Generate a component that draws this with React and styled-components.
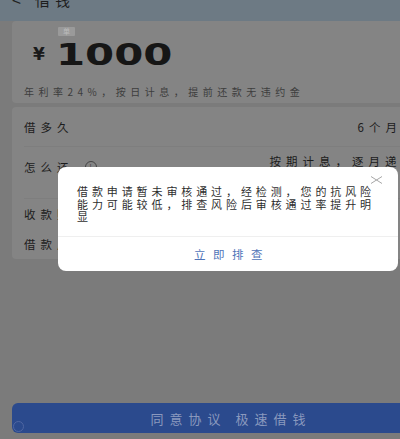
import React from "react";
import styled, { createGlobalStyle } from "styled-components";

const Global = createGlobalStyle`
  html, body { margin: 0; padding: 0; overflow: hidden; background: #7b7b7b; }
  body { font-family: "Noto Sans CJK SC", "Noto Sans", sans-serif; }
  * { box-sizing: border-box; }
`;

const Page = styled.div`
  position: relative;
  width: 456px;
  height: 439px;
  background: #7b7b7b;
  display: flex;
  flex-direction: column;
  overflow: hidden;
`;

const Header = styled.div`
  height: 21px;
  background: #6d7a84;
  display: flex;
  align-items: flex-start;
  gap: 14px;
  padding-left: 12px;
  overflow: hidden;
`;

const Back = styled.span`
  margin-top: -9px;
  font-size: 16px;
  line-height: 16px;
  color: #222;
`;

const Title = styled.span`
  margin-top: -8px;
  font-size: 15px;
  line-height: 15px;
  letter-spacing: 5px;
  color: #1e1e1e;
`;

const Card = styled.div`
  margin: ${(p) => p.$mt || 0}px 12px 0;
  background: #848484;
  border-radius: 4px;
  display: flex;
  flex-direction: column;
`;

const AmountCard = styled(Card)`
  padding: 6px 12px 6px 12px;
  height: 82px;
`;

const Badge = styled.span`
  margin-left: 34px;
  width: 17px;
  height: 9px;
  background: #9a9a9a;
  border-radius: 1px;
  font-size: 7px;
  line-height: 9px;
  color: #bcbcbc;
  text-align: center;
`;

const AmountRow = styled.div`
  display: flex;
  align-items: center;
  height: 34px;
  margin-top: 1px;
`;

const Yen = styled.span`
  width: 32px;
  padding-left: 9px;
  font-family: "DejaVu Sans", sans-serif;
  font-weight: bold;
  font-size: 17px;
  color: #1a1a1a;
`;

const Amount = styled.span`
  display: inline-block;
  font-family: "DejaVu Sans", sans-serif;
  font-weight: bold;
  font-size: 31px;
  line-height: 34px;
  color: #161616;
  transform: scaleX(1.35);
  transform-origin: left center;
`;

const Note = styled.div`
  margin-top: 14px;
  font-size: 10px;
  line-height: 14px;
  letter-spacing: 4.5px;
  color: #3d3d3d;
  white-space: nowrap;
`;

const ListCard = styled(Card)`
  padding: 0 26px 0 12px;
`;

const Row = styled.div`
  display: flex;
  justify-content: space-between;
  align-items: ${(p) => (p.$top ? "flex-start" : "center")};
  height: ${(p) => p.$h}px;
  padding-top: ${(p) => (p.$top ? 12 : 0)}px;
  border-bottom: ${(p) => (p.$line ? "1px solid #7e7e7e" : "none")};
`;

const Label = styled.span`
  display: flex;
  align-items: center;
  gap: 11px;
  font-size: 11.5px;
  line-height: 16px;
  letter-spacing: 5px;
  color: #1c1c1c;
`;

const Info = styled.span`
  width: 12px;
  height: 12px;
  border: 1px solid #444;
  border-radius: 50%;
  font-size: 8px;
  line-height: 10px;
  text-align: center;
  color: #444;
  letter-spacing: 0;
`;

const Value = styled.span`
  display: flex;
  align-items: center;
  gap: 2px;
  margin-top: ${(p) => (p.$up ? -6 : 0)}px;
  font-size: 11.5px;
  line-height: 16px;
  letter-spacing: 5px;
  color: #1c1c1c;
  white-space: nowrap;
`;

const Spacer = styled.div`
  flex: 1;
`;

const Footer = styled.div`
  padding: 0 12px 6px;
`;

const Button = styled.div`
  position: relative;
  height: 30px;
  border-radius: 6px;
  background: #2b4a8d;
  display: flex;
  align-items: center;
  justify-content: center;
  font-size: 13px;
  letter-spacing: 6px;
  color: #8a99be;
  padding-left: 6px;
`;

const Radio = styled.span`
  position: absolute;
  left: 1px;
  bottom: 1px;
  width: 11px;
  height: 11px;
  border-radius: 50%;
  border: 1px solid #4f66a2;
`;

const Overlay = styled.div`
  position: absolute;
  inset: 0;
  display: flex;
  justify-content: center;
  align-items: flex-start;
  padding-top: 167px;
`;

const Modal = styled.div`
  position: relative;
  width: 340px;
  height: 104px;
  background: #fff;
  border-radius: 8px;
  display: flex;
  flex-direction: column;
`;

const Message = styled.div`
  padding: 18px 20px 0 19px;
  height: 70px;
  font-size: 11px;
  line-height: 12.5px;
  letter-spacing: 3.9px;
  color: #2e2e2e;
  border-bottom: 1px solid #efefef;
`;

const Action = styled.div`
  flex: 1;
  display: flex;
  align-items: center;
  justify-content: center;
  font-size: 11.5px;
  letter-spacing: 7.5px;
  color: #4f74b8;
  padding-left: 8px;
`;

const Close = styled.svg`
  position: absolute;
  top: 9px;
  right: 15px;
`;

export default function App() {
  return (
    <>
      <Global />
      <Page>
        <Header>
          <Back>&lt;</Back>
          <Title>借钱</Title>
        </Header>
        <AmountCard>
          <Badge>单</Badge>
          <AmountRow>
            <Yen>¥</Yen>
            <Amount>1000</Amount>
          </AmountRow>
          <Note>年利率24%，按日计息，提前还款无违约金</Note>
        </AmountCard>
        <ListCard $mt={4}>
          <Row $h={40} $line>
            <Label>借多久</Label>
            <Value>
              6个月
              <svg width="14" height="14" viewBox="0 0 14 14">
                <path d="M5 3l4 4-4 4" fill="none" stroke="#444" strokeWidth="1.3" />
              </svg>
            </Value>
          </Row>
          <Row $h={52} $top $line>
            <Label>
              怎么还<Info>!</Info>
            </Label>
            <Value $up>按期计息，逐月递减</Value>
          </Row>
          <Row $h={30}>
            <Label>收款账户</Label>
          </Row>
          <Row $h={30}>
            <Label>借款用途</Label>
          </Row>
        </ListCard>
        <Spacer />
        <Footer>
          <Button>
            同意协议 极速借钱
            <Radio />
          </Button>
        </Footer>
        <Overlay>
          <Modal>
            <Close width="13" height="8" viewBox="0 0 13 8">
              <path d="M1 0.5l11 7M12 0.5L1 7.5" stroke="#a8a8a8" strokeWidth="1" fill="none" />
            </Close>
            <Message>
              借款申请暂未审核通过，经检测，您的抗风险能力可能较低，排查风险后审核通过率提升明显
            </Message>
            <Action>立即排查</Action>
          </Modal>
        </Overlay>
      </Page>
    </>
  );
}
